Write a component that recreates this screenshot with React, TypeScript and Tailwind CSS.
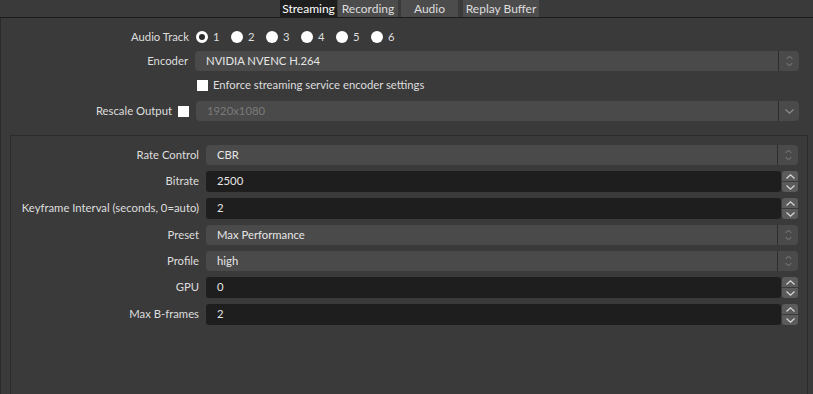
import React from 'react';

const font = { fontFamily: 'Lato, "Noto Sans", sans-serif' };

function Chevron({ up, className }: { up?: boolean; className?: string }) {
  return (
    <svg width="9" height="5" viewBox="0 0 9 5" className={className}>
      <path
        d={up ? 'M0.5 4.5 L4.5 0.8 L8.5 4.5' : 'M0.5 0.5 L4.5 4.2 L8.5 0.5'}
        fill="none"
        stroke="currentColor"
        strokeWidth="1.2"
      />
    </svg>
  );
}

function Combo({ value, disabled, single }: { value: string; disabled?: boolean; single?: boolean }) {
  return (
    <div className="flex h-[20px] flex-1 items-stretch rounded-[4px] bg-[#4a4a4a]">
      <div className={`flex flex-1 items-center pl-[11px] ${disabled ? 'text-[#7a7a7a]' : 'text-[#e6e6e6]'}`}>{value}</div>
      <div className="w-px bg-[#2c2c2c]" />
      <div className="flex w-[20px] flex-col items-center justify-center gap-[2px] text-[#8c8c8c]">
        {single ? (
          <Chevron />
        ) : (
          <>
            <Chevron up className="scale-75" />
            <Chevron className="scale-75" />
          </>
        )}
      </div>
    </div>
  );
}

function Spin({ value }: { value: string }) {
  return (
    <div className="flex h-[21px] flex-1 items-stretch">
      <div className="flex flex-1 items-center rounded-[3px] bg-[#1e1e1e] pl-[11px] text-[#e6e6e6]">{value}</div>
      <div className="ml-px flex w-[16px] flex-col gap-px">
        <div className="flex flex-1 items-center justify-center rounded-t-[3px] bg-[#5b5b5b] text-[#d8d8d8]">
          <Chevron up />
        </div>
        <div className="flex flex-1 items-center justify-center rounded-b-[3px] bg-[#5b5b5b] text-[#d8d8d8]">
          <Chevron />
        </div>
      </div>
    </div>
  );
}

function Radio({ checked, n }: { checked?: boolean; n: number }) {
  return (
    <div className="flex w-[35px] items-center gap-[5px]">
      <div
        className={`h-[12px] w-[12px] rounded-full ${checked ? 'border-[3px] border-white bg-[#2a2a2a]' : 'bg-white'}`}
      />
      <span>{n}</span>
    </div>
  );
}

function Row({ label, children }: { label: string; children: React.ReactNode }) {
  return (
    <div className="flex items-center">
      <div className="w-[195px] whitespace-nowrap pr-[7px] text-right">{label}</div>
      {children}
    </div>
  );
}

export default function App() {
  return (
    <div className="h-[394px] w-[813px] overflow-hidden bg-[#3a3a3a] text-[11.3px] text-[#dedede]" style={font}>
      {/* Tab bar */}
      <div className="flex h-[18px] border-b border-[#1c1c1c] pl-[280px] text-[12px] leading-none">
        <div className="flex h-[17px] w-[57px] items-center justify-center bg-[#1e1e1e] text-white">Streaming</div>
        <div className="ml-px flex h-[17px] w-[60px] items-center justify-center bg-[#4c4c4c]">Recording</div>
        <div className="ml-[3px] flex h-[17px] w-[57px] items-center justify-center bg-[#4c4c4c]">Audio</div>
        <div className="ml-[5px] flex h-[17px] w-[76px] items-center justify-center bg-[#4c4c4c]">Replay Buffer</div>
      </div>

      <div className="border-l border-[#2a2a2a]">
        {/* Top settings */}
        <div className="flex flex-col pr-[14px] pt-[10px]">
          <div className="flex h-[18px] items-center">
            <div className="w-[189px] pr-[1px] text-right">Audio Track</div>
            <div className="ml-[6px] flex items-center">
              {[1, 2, 3, 4, 5, 6].map((n) => (
                <Radio key={n} n={n} checked={n === 1} />
              ))}
            </div>
          </div>
          <div className="mt-[5px] flex items-center">
            <div className="w-[188px] pr-[1px] text-right">Encoder</div>
            <div className="ml-[6px] flex flex-1">
              <Combo value="NVIDIA NVENC H.264" />
            </div>
          </div>
          <div className="mt-[8px] flex h-[12px] items-center pl-[196px]">
            <div className="h-[11px] w-[11px] bg-white" />
            <span className="ml-[5px]">Enforce streaming service encoder settings</span>
          </div>
          <div className="mt-[10px] flex items-center">
            <div className="w-[171px] whitespace-nowrap text-right">Rescale Output</div>
            <div className="ml-[6px] h-[11px] w-[11px] bg-white" />
            <div className="ml-[7px] flex flex-1">
              <Combo value="1920x1080" disabled single />
            </div>
          </div>
        </div>

        {/* Encoder settings group */}
        <div className="ml-[9px] mr-[5px] mt-[14px] h-[300px] border border-[#2b2b2b] pr-[9px] pt-[9px]">
          <div className="flex flex-col gap-[6px]">
            <Row label="Rate Control">
              <Combo value="CBR" />
            </Row>
            <Row label="Bitrate">
              <Spin value="2500" />
            </Row>
            <Row label="Keyframe Interval (seconds, 0=auto)">
              <Spin value="2" />
            </Row>
            <Row label="Preset">
              <Combo value="Max Performance" />
            </Row>
            <Row label="Profile">
              <Combo value="high" />
            </Row>
            <Row label="GPU">
              <Spin value="0" />
            </Row>
            <Row label="Max B-frames">
              <Spin value="2" />
            </Row>
          </div>
        </div>
      </div>
    </div>
  );
}
